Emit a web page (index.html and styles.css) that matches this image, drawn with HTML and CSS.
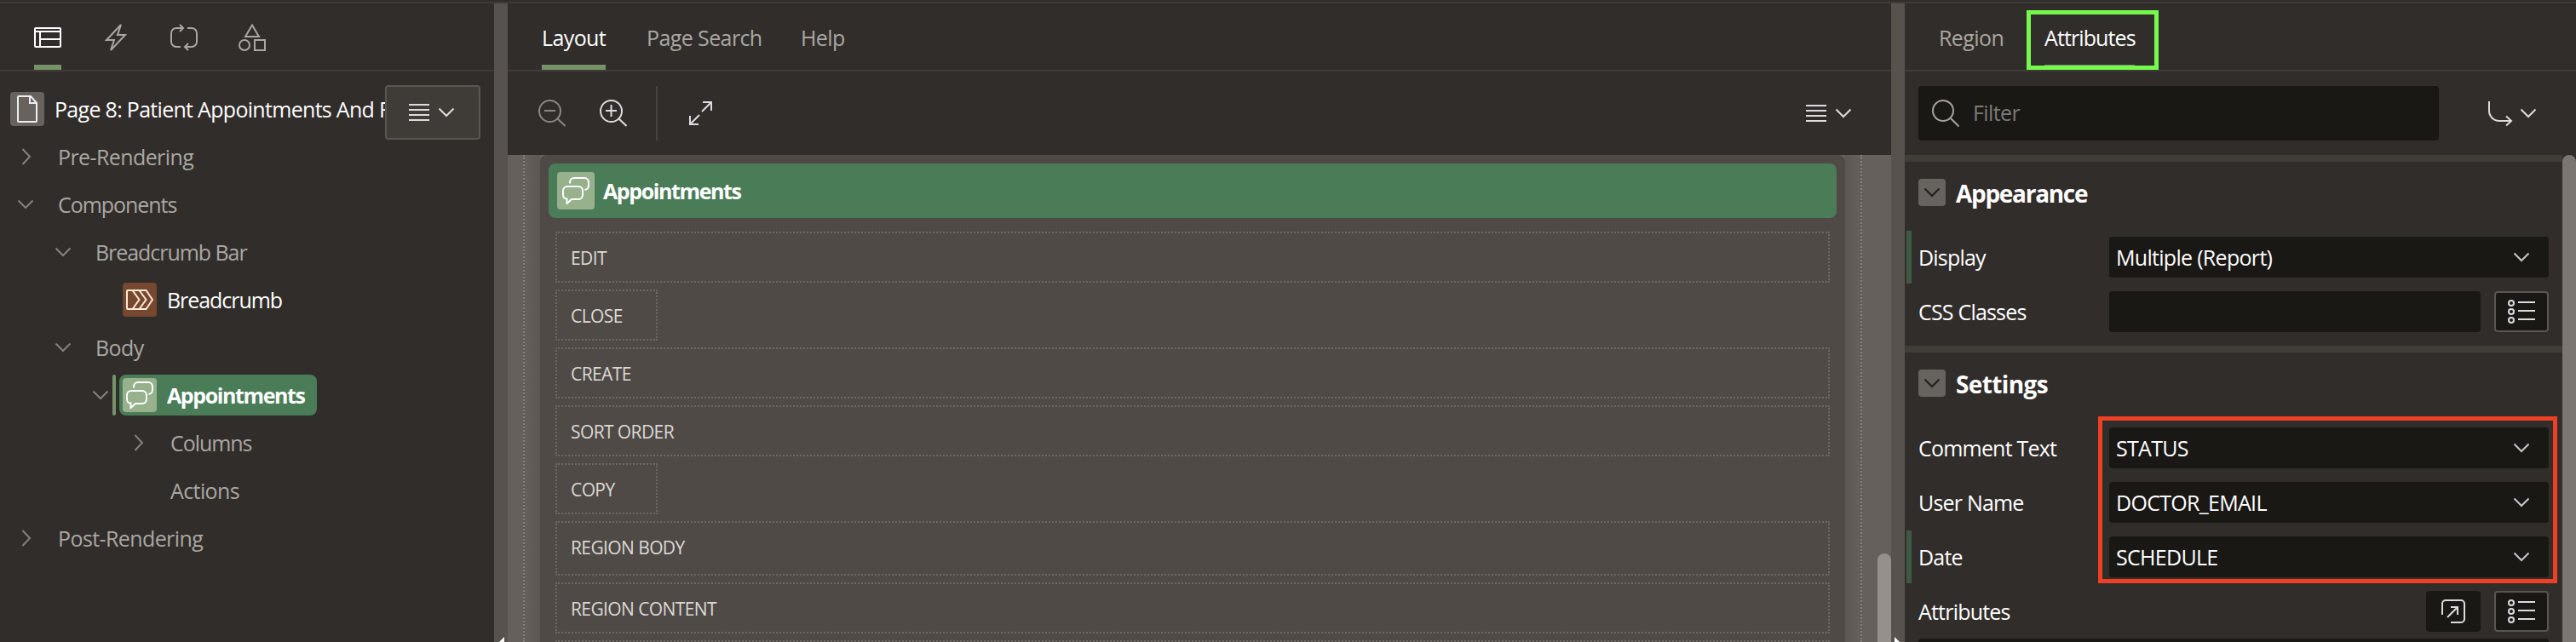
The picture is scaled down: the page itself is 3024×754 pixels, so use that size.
FILE: index.html
```html
<!DOCTYPE html>
<html lang="en">
<head>
<meta charset="utf-8">
<title>Page Designer</title>
<link rel="stylesheet" href="styles.css">
</head>
<body>
<svg width="0" height="0" class="defs">
  <symbol id="down" viewBox="0 0 20 12"><path d="M1.5 1.5 10 10l8.500-8.500"/></symbol>
  <symbol id="right" viewBox="0 0 12 20"><path d="M1.500 1 10 10l-8.500 9"/></symbol>
  <symbol id="menu" viewBox="0 0 24 22"><path d="M0 2h24M0 8h24M0 14h24M0 20h24"/></symbol>
  <symbol id="chat" viewBox="0 0 32 32"><path d="M9 7.500V6a5 5 0 0 1 5-5h12a5 5 0 0 1 5 5v4a5 5 0 0 1-4.500 5M6 11h13a5 5 0 0 1 5 5v5a5 5 0 0 1-5 5h-8l-5.500 5v-5.500A4.500 4.500 0 0 1 1 21v-5a5 5 0 0 1 5-5z"/></symbol>
  <symbol id="list" viewBox="0 0 32 30"><g><circle cx="4" cy="5" r="3"/><circle cx="4" cy="15" r="3"/><circle cx="4" cy="25" r="3"/><path d="M12 4h20M12 14h20M12 24h20"/></g></symbol>
</svg>
<div class="app">
  <aside class="tree-panel">
    <nav class="tabs icons">
      <a class="tab on"><svg class="i32" viewBox="0 0 32 32"><path d="M2 5h28a1 1 0 0 1 1 1v20a1 1 0 0 1-1 1H2a1 1 0 0 1-1-1V6a1 1 0 0 1 1-1zM1 9h30M7 9v18M7 18h24"/></svg></a>
      <a class="tab"><svg class="i32" viewBox="0 0 32 32"><path d="M22 1 5 19h9l-4 12 17-18h-9z"/></svg></a>
      <a class="tab"><svg class="i32" viewBox="0 0 32 32"><path d="M12 27H7a6 6 0 0 1-6-6V11a6 6 0 0 1 6-6h8M11 1l4 4-4 4M20 5h5a6 6 0 0 1 6 6v10a6 6 0 0 1-6 6h-8M21 23l-4 4 4 4"/></svg></a>
      <a class="tab"><svg class="i32" viewBox="0 0 32 32"><path d="M16 1.500 24 15H8zM19 19h12v12H19z"/><circle cx="7" cy="25" r="6"/></svg></a>
    </nav>
    <div class="tree">
      <div class="row l0"><span class="tile page"><svg width="32" height="32" viewBox="0 0 32 32"><path d="M6 1h14l7 8v21a1 1 0 0 1-1 1H6a1 1 0 0 1-1-1V2a1 1 0 0 1 1-1zM19 1v8h8"/></svg></span><b class="med page-name">Page 8: Patient Appointments And Feedback</b></div>
      <div class="row l1"><svg class="cr"><use href="#right"/></svg><span>Pre-Rendering</span></div>
      <div class="row l1"><svg class="cd"><use href="#down"/></svg><span class="tight">Components</span></div>
      <div class="row l2"><svg class="cd"><use href="#down"/></svg><span class="tight">Breadcrumb Bar</span></div>
      <div class="row l3"><span class="tile crumb"><svg width="32" height="32" viewBox="0 0 32 32"><path d="M2 5h21.500L31 16l-7.500 11H2a1 1 0 0 1-1-1V6a1 1 0 0 1 1-1zM7.500 5l8 11-8 11M15.500 5l8 11-8 11"/></svg></span><b class="med tight">Breadcrumb</b></div>
      <div class="row l2"><svg class="cd"><use href="#down"/></svg><span>Body</span></div>
      <div class="row l4"><svg class="cd"><use href="#down"/></svg><i class="mark"></i><span class="pill"><span class="tile chat"><svg width="32" height="32"><use href="#chat"/></svg></span><b class="strong">Appointments</b></span></div>
      <div class="row l5"><svg class="cr"><use href="#right"/></svg><span class="tight">Columns</span></div>
      <div class="row l6"><span>Actions</span></div>
      <div class="row l1"><svg class="cr"><use href="#right"/></svg><span>Post-Rendering</span></div>
    </div>
    <button class="menu-btn tree-menu"><svg width="24" height="22"><use href="#menu"/></svg><svg class="cd"><use href="#down"/></svg></button>
  </aside>
  <div class="split first"><i></i></div>
  <main class="center">
    <nav class="tabs"><a class="tab on w-layout">Layout</a><a class="tab w-search">Page Search</a><a class="tab">Help</a></nav>
    <div class="toolbar">
      <svg class="i32 dim" viewBox="0 0 32 32"><circle cx="13.500" cy="13.500" r="12.500"/><path d="M7 13h13M22 22 31.500 31"/></svg>
      <svg class="i32" viewBox="0 0 32 32"><circle cx="13.500" cy="13.500" r="12.500"/><path d="M7 13h13M13.500 6v14M22 22 31.500 31"/></svg>
      <i class="sep"></i>
      <svg class="i32" viewBox="0 0 32 32"><path d="M17 14 28 3M18 3h10v10M14 18 3 29M3 19v10h10"/></svg>
      <span class="menu-btn"><svg width="24" height="22"><use href="#menu"/></svg><svg class="cd"><use href="#down"/></svg></span>
    </div>
    <div class="canvas">
      <div class="gutter left"></div>
      <section class="region">
        <header><span class="tile chat big"><svg width="32" height="32"><use href="#chat"/></svg></span><b class="strong">Appointments</b></header>
        <div class="slots">
          <div class="slot">EDIT</div>
          <div class="slot small">CLOSE</div>
          <div class="slot">CREATE</div>
          <div class="slot">SORT ORDER</div>
          <div class="slot small">COPY</div>
          <div class="slot tall">REGION BODY</div>
          <div class="slot">REGION CONTENT</div>
          <div class="slot"></div>
        </div>
      </section>
      <div class="gutter right"></div>
      <i class="thumb"></i>
    </div>
  </main>
  <div class="split second"><i></i></div>
  <aside class="props">
    <nav class="tabs"><a class="tab w-region">Region</a><a class="tab on w-attr">Attributes</a></nav>
    <div class="filter-bar">
      <div class="filter"><svg class="i32" viewBox="0 0 32 32"><circle cx="13" cy="13" r="12"/><path d="M22 22l9.500 9.500"/></svg><span>Filter</span></div>
      <span class="goto"><svg class="i32" viewBox="0 0 32 32"><path d="M4 2v11a12 12 0 0 0 12 12h14M24 19.500 30 25l-6 5.500"/></svg><svg class="cd"><use href="#down"/></svg></span>
    </div>
    <div class="prop-body">
      <div class="groups">
        <section class="group appearance">
          <h2><span class="box"><svg class="cd"><use href="#down"/></svg></span><span class="head-tight">Appearance</span></h2>
          <div class="field changed"><label>Display</label><div class="select"><span>Multiple (Report)</span><svg class="cd"><use href="#down"/></svg></div></div>
          <div class="field"><label>CSS Classes</label><div class="select"></div><span class="sq"><svg width="32" height="30"><use href="#list"/></svg></span></div>
        </section>
        <section class="group">
          <h2><span class="box"><svg class="cd"><use href="#down"/></svg></span><span>Settings</span></h2>
          <div class="field"><label>Comment Text</label><div class="select"><span>STATUS</span><svg class="cd"><use href="#down"/></svg></div></div>
          <div class="field"><label>User Name</label><div class="select"><span>DOCTOR_EMAIL</span><svg class="cd"><use href="#down"/></svg></div></div>
          <div class="field changed"><label>Date</label><div class="select"><span>SCHEDULE</span><svg class="cd"><use href="#down"/></svg></div></div>
          <div class="field"><label class="grow">Attributes</label><span class="sq plain"><svg class="i32" viewBox="0 0 32 32"><path d="M3 20V7a4 4 0 0 1 4-4h18a4 4 0 0 1 4 4v18a4 4 0 0 1-4 4H13M9 23 21 11M13 11h8v9"/></svg></span><span class="sq"><svg width="32" height="30"><use href="#list"/></svg></span></div>
          <div class="area"></div>
        </section>
      </div>
      <i class="thumb"></i>
    </div>
    <div class="hl green"></div>
    <div class="hl red"></div>
  </aside>
</div>
</body>
</html>
```

FILE: styles.css
```css
* { box-sizing: border-box; }
body { margin: 0; background: #312d2a; font-family: "Open Sans", "Noto Sans", sans-serif; font-size: 25px; letter-spacing: -0.6px; color: #aaa7a3; overflow: hidden; }
svg { fill: none; stroke: currentColor; stroke-width: 2; flex: none; display: block; }
.defs { position: absolute; }
.app { display: flex; height: 754px; padding-top: 4px; background: linear-gradient(#312d2a 2px, #403b37 2px, #403b37 4px, #312d2a 4px); overflow: hidden; }
.i32 { width: 32px; height: 32px; }
.cd { width: 20px; height: 12px; }
.cr { width: 12px; height: 20px; }
.med { font-weight: 500; }
.tight { letter-spacing: -1.05px; }
.strong { font-weight: 700; letter-spacing: -1.4px; }
.tree-panel { width: 580px; position: relative; flex: none; }
.split { width: 16px; flex: none; background: #57524d; display: flex; align-items: flex-end; }
.split i { border: 5px solid transparent; border-top-width: 0; border-bottom: 6px solid #fff; }
.first i { border-left: 6px solid transparent; border-right: 0; margin-left: 6px; }
.second i { border-right: 6px solid transparent; border-left: 0; margin-left: 4px; }
.tabs { height: 80px; border-bottom: 2px solid #403b37; padding-left: 40px; display: flex; gap: 48px; }
.tab { height: 78px; display: flex; align-items: center; padding-top: 1px; white-space: nowrap; }
.on { color: #fff; font-weight: 500; border-bottom: 6px solid #759269; padding-top: 7px; }
.icons .tab { padding-top: 2px; }
.icons .on { padding-top: 8px; }
.tree { padding-top: 16px; }
.row { height: 56px; display: flex; align-items: center; white-space: nowrap; }
.row > svg { color: #85817d; }
.row b { color: #fff; }
.l0 { padding-left: 12px; gap: 12px; }
.page-name { width: 390px; overflow: hidden; letter-spacing: -0.7px; }
.l1 { padding-left: 20px; }
.l2 { padding-left: 64px; }
.l3 { padding-left: 144px; gap: 12px; }
.l4 { padding-left: 108px; }
.l5 { padding-left: 152px; }
.l6 { padding-left: 200px; }
.row > .cd { margin-right: 28px; }
.row > .cr { margin: 0 31px 0 5px; }
.row.l4 > .cd { margin-right: 4px; }
.tile { width: 40px; height: 40px; border-radius: 4px; display: flex; align-items: center; justify-content: center; flex: none; }
.page { background: #67625e; color: #eee; }
.crumb { background: #75482f; color: #fde9d6; }
.chat { background: #97b18d; color: #fff; }
.big { width: 44px; height: 44px; }
.mark { width: 4px; height: 48px; border-radius: 2px; background: #759269; margin-right: 4px; }
.pill { width: 232px; height: 48px; border-radius: 8px; background: #4a7d57; display: flex; align-items: center; gap: 12px; padding-left: 4px; }
.menu-btn { display: flex; align-items: center; gap: 10px; color: #dedcda; }
.tree-menu { position: absolute; left: 452px; top: 96px; width: 112px; height: 64px; padding: 0 0 0 26px; background: #3f3b37; border: 2px solid #5a554f; border-radius: 4px; }
.center { width: 1624px; flex: none; }
.w-layout { width: 75px; }
.w-search { width: 133px; }
.toolbar { height: 98px; padding: 0 46px 0 36px; display: flex; align-items: center; color: #dedcda; }
.toolbar .i32 { margin-right: 40px; }
.toolbar .dim { color: #8b8783; }
.sep { width: 2px; height: 64px; background: #47433e; margin: 0 35px 0 -6px; }
.toolbar .menu-btn { margin-left: auto; }
.canvas { height: 572px; display: flex; background: #65605b; position: relative; }
.gutter { width: 20px; flex: none; }
.left { margin-left: 18px; border-left: 2px dotted #85807b; background: linear-gradient(90deg, #65605b, #5c5752); }
.right { border-right: 2px dotted #85807b; background: linear-gradient(270deg, #65605b, #5c5752); }
.region { width: 1532px; height: 572px; border-radius: 8px 8px 0 0; background: #4f4a46; padding: 10px 10px 0; overflow: hidden; flex: none; }
.region header { height: 64px; border-radius: 8px; background: #4a7d57; display: flex; align-items: center; padding-left: 10px; gap: 10px; color: #fff; }
.slots { padding: 16px 8px 0; display: flex; flex-direction: column; gap: 8px; }
.slot { height: 60px; border: 2px dotted #6d6864; border-radius: 2px; padding: 14px 16px; line-height: 30px; font-size: 21px; color: #dcd9d6; flex: none; letter-spacing: -0.6px; }
.small { width: 120px; }
.tall { height: 64px; }
.thumb { width: 16px; border-radius: 8px 8px 0 0; }
.canvas .thumb { position: absolute; right: 0; bottom: 0; height: 104px; background: #95908c; }
.props { width: 788px; flex: none; position: relative; }
.w-region { width: 76px; }
.w-attr { width: 106px; letter-spacing: -0.9px; }
.filter-bar { height: 98px; padding: 0 46px 0 16px; display: flex; align-items: center; justify-content: space-between; }
.filter { width: 611px; height: 64px; border-radius: 4px; background: #191815; padding-left: 16px; display: flex; align-items: center; gap: 16px; color: #7d7a77; }
.filter svg { color: #a5a29f; }
.filter span { padding-bottom: 2px; }
.goto { display: flex; align-items: center; gap: 8px; color: #dedcda; }
.prop-body { display: flex; height: 572px; }
.groups { width: 772px; }
.prop-body .thumb { background: #7b7672; }
.group { border-top: 8px solid #403c37; padding: 20px 16px 0; }
.appearance { height: 224px; }
h2 { margin: 0 0 28px; height: 32px; display: flex; align-items: center; gap: 12px; font-size: 28px; font-weight: 700; color: #fff; letter-spacing: -0.6px; }
h2 > span + span { padding-top: 1px; }
.head-tight { letter-spacing: -1.3px; }
.box { width: 32px; height: 32px; border-radius: 4px; background: #67635e; color: #201e1c; display: flex; align-items: center; justify-content: center; }
.field { height: 64px; display: flex; align-items: center; gap: 16px; margin: 0 0 0 -14px; padding-left: 14px; color: #fff; letter-spacing: -0.8px; }
.changed { background: linear-gradient(#3f5a43, #3f5a43) 0 1px / 6px 62px no-repeat; }
.field label { width: 208px; flex: none; }
.field .grow { width: auto; flex: 1; }
.select { flex: 1; height: 48px; border-radius: 4px; background: #191815; display: flex; align-items: center; justify-content: space-between; padding: 0 22px 0 8px; letter-spacing: -0.7px; }
.select svg { color: #c9c7c5; }
.sq { width: 64px; height: 48px; border: 2px solid #5a554f; border-radius: 4px; background: #191815; color: #dedcda; display: flex; align-items: center; justify-content: center; }
.plain { border-color: #191815; }
.area { height: 60px; background: #191815; border-radius: 4px; }
.hl { position: absolute; border: 5px solid #75f94c; }
.green { left: 143px; top: 8px; width: 155px; height: 70px; }
.red { left: 227px; top: 485px; width: 539px; height: 196px; border-color: #ee4024; }
```
